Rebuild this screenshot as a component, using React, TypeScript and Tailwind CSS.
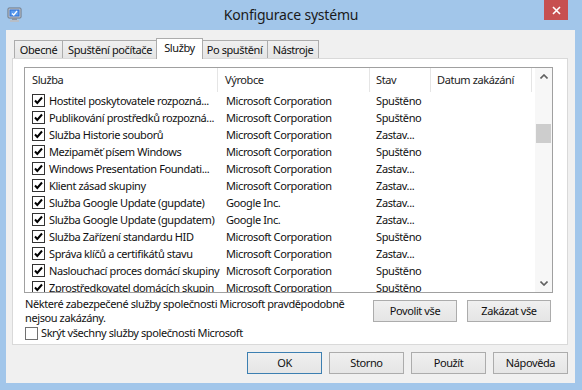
import React from "react";

type Row = { name: string; maker: string; state: string };

const rows: Row[] = [
  { name: "Hostitel poskytovatele rozpozná...", maker: "Microsoft Corporation", state: "Spuštěno" },
  { name: "Publikování prostředků rozpozná...", maker: "Microsoft Corporation", state: "Spuštěno" },
  { name: "Služba Historie souborů", maker: "Microsoft Corporation", state: "Zastav..." },
  { name: "Mezipaměť písem Windows", maker: "Microsoft Corporation", state: "Spuštěno" },
  { name: "Windows Presentation Foundati...", maker: "Microsoft Corporation", state: "Zastav..." },
  { name: "Klient zásad skupiny", maker: "Microsoft Corporation", state: "Zastav..." },
  { name: "Služba Google Update (gupdate)", maker: "Google Inc.", state: "Zastav..." },
  { name: "Služba Google Update (gupdatem)", maker: "Google Inc.", state: "Zastav..." },
  { name: "Služba Zařízení standardu HID", maker: "Microsoft Corporation", state: "Spuštěno" },
  { name: "Správa klíčů a certifikátů stavu", maker: "Microsoft Corporation", state: "Zastav..." },
  { name: "Naslouchací proces domácí skupiny", maker: "Microsoft Corporation", state: "Spuštěno" },
  { name: "Zprostředkovatel domácích skupin", maker: "Microsoft Corporation", state: "Spuštěno" },
];

function CheckBox({ checked, light }: { checked: boolean; light?: boolean }) {
  return (
    <div
      className={
        "w-[13px] h-[13px] shrink-0 bg-white border flex items-center justify-center " +
        (light ? "border-[#707070]" : "border-[#333333]")
      }
    >
      {checked && (
        <svg width="11" height="11" viewBox="0 0 11 11">
          <path d="M2 5.5 L4.3 8 L9 2.5" fill="none" stroke="#000" strokeWidth="2" />
        </svg>
      )}
    </div>
  );
}

function Btn({ label, w, def }: { label: string; w: string; def?: boolean }) {
  return (
    <div
      className={
        "h-[22px] flex items-center justify-center border bg-gradient-to-b from-[#f0f0f0] to-[#e5e5e5] " +
        w +
        " " +
        (def ? "border-[#3c7fb1]" : "border-[#acacac]")
      }
    >
      {label}
    </div>
  );
}

function AppIcon() {
  return (
    <svg width="15" height="16" viewBox="0 0 15 16">
      <rect x="1" y="1" width="13" height="10" rx="1" fill="#c9ced6" stroke="#6b7482" strokeWidth="1" />
      <rect x="2.5" y="2.5" width="10" height="7" fill="#2f6fd0" />
      <rect x="3.5" y="3.5" width="8" height="5" fill="#5b9cf0" />
      <path d="M5 6.5 L6.8 8 L10 4" fill="none" stroke="#fff" strokeWidth="1.3" />
      <rect x="5" y="11" width="5" height="2" fill="#8a93a0" />
      <rect x="3" y="13" width="9" height="2" fill="#b7bec8" />
    </svg>
  );
}

const tab =
  "h-[18px] border border-b-0 border-[#acacac] bg-gradient-to-b from-[#f0f0f0] to-[#e5e5e5] flex items-center justify-center whitespace-nowrap";

export default function App() {
  return (
    <div className="w-[582px] h-[390px] bg-[#a2c6ea] flex flex-col overflow-hidden font-['Noto_Sans',sans-serif] text-[11px] leading-[14px] tracking-[-0.4px] text-[#111]">
      {/* title bar */}
      <div className="h-[30px] shrink-0 grid grid-cols-[1fr_auto_1fr]">
        <div className="pl-[7px] pt-[7px]">
          <AppIcon />
        </div>
        <div className="pt-[6px] text-[14px] leading-[18px] tracking-[-0.2px] text-[#1a1a1a]">Konfigurace systému</div>
        <div className="flex justify-end pr-[14px]">
          <div className="w-[24px] h-[20px] bg-[#c75050] flex items-center justify-center">
            <svg width="9" height="9" viewBox="0 0 9 9">
              <path d="M1 1 L8 8 M8 1 L1 8" stroke="#fff" strokeWidth="1.6" />
            </svg>
          </div>
        </div>
      </div>

      {/* client area */}
      <div className="ml-[6px] mr-[7px] h-[353px] shrink-0 bg-[#f0f0f0] flex flex-col">
        {/* tabs */}
        <div className="h-[28px] pl-[8px] flex items-end shrink-0">
          <div className={"w-[49px] " + tab}>Obecné</div>
          <div className={"w-[96px] -ml-[1px] " + tab}>Spuštění počítače</div>
          <div className="w-[47px] h-[21px] -ml-[2px] -mr-[2px] -mb-[1px] relative z-10 border border-b-0 border-[#acacac] bg-white flex items-start justify-center pt-[2px]">
            Služby
          </div>
          <div className={"w-[67px] " + tab}>Po spuštění</div>
          <div className={"w-[52px] -ml-[1px] " + tab}>Nástroje</div>
        </div>

        {/* tab panel */}
        <div className="ml-[6px] mr-[7px] h-[287px] shrink-0 bg-white border border-[#d9d9d9] pl-[11px] pr-[14px] pt-[8px] flex flex-col">
          {/* list view */}
          <div className="h-[226px] shrink-0 border border-[#a0a0a0] flex overflow-hidden">
            <div className="flex-1 flex flex-col overflow-hidden">
              {/* header */}
              <div className="h-[24px] shrink-0 flex text-[#222]">
                <div className="w-[193px] border-r border-[#e5e5e5] pl-[7px] flex items-center">Služba</div>
                <div className="w-[152px] border-r border-[#e5e5e5] pl-[7px] flex items-center">Výrobce</div>
                <div className="w-[61px] border-r border-[#e5e5e5] pl-[6px] flex items-center">Stav</div>
                <div className="w-[101px] border-r border-[#e5e5e5] pl-[6px] flex items-center">Datum zakázání</div>
              </div>
              {rows.map((r) => (
                <div key={r.name} className="h-[17px] shrink-0 flex items-center">
                  <div className="w-[193px] shrink-0 pl-[7px] flex items-center gap-[4px] whitespace-nowrap">
                    <CheckBox checked />
                    <span>{r.name}</span>
                  </div>
                  <div className="w-[152px] shrink-0 pl-[8px] whitespace-nowrap overflow-hidden">{r.maker}</div>
                  <div className="w-[61px] shrink-0 pl-[6px] whitespace-nowrap overflow-hidden">{r.state}</div>
                </div>
              ))}
            </div>
            {/* scrollbar */}
            <div className="w-[17px] shrink-0 bg-[#f7f7f7] flex flex-col">
              <div className="h-[17px] flex items-center justify-center">
                <svg width="8" height="5" viewBox="0 0 8 5">
                  <path d="M0.5 4.5 L4 1 L7.5 4.5" fill="none" stroke="#606060" strokeWidth="1.6" />
                </svg>
              </div>
              <div className="h-[39px]" />
              <div className="h-[19px] mx-[1px] bg-[#cdcdcd]" />
              <div className="flex-1" />
              <div className="h-[17px] flex items-center justify-center">
                <svg width="8" height="5" viewBox="0 0 8 5">
                  <path d="M0.5 0.5 L4 4 L7.5 0.5" fill="none" stroke="#606060" strokeWidth="1.6" />
                </svg>
              </div>
            </div>
          </div>

          {/* below list */}
          <div className="flex pl-[1px] pr-[2px]">
            <div className="flex-1 flex flex-col pt-[4px]">
              <div>Některé zabezpečené služby společnosti Microsoft pravděpodobně</div>
              <div>nejsou zakázány.</div>
              <div className="flex items-center gap-[3px] mt-[1px]">
                <CheckBox checked={false} light />
                <span>Skrýt všechny služby společnosti Microsoft</span>
              </div>
            </div>
            <div className="flex gap-[10px] pt-[7px]">
              <Btn label="Povolit vše" w="w-[84px]" />
              <Btn label="Zakázat vše" w="w-[84px]" />
            </div>
          </div>
        </div>

        {/* dialog buttons */}
        <div className="flex justify-end gap-[7px] pr-[7px] pt-[7px]">
          <Btn label="OK" w="w-[75px]" def />
          <Btn label="Storno" w="w-[75px]" />
          <Btn label="Použít" w="w-[75px]" />
          <Btn label="Nápověda" w="w-[75px]" />
        </div>
      </div>
    </div>
  );
}
